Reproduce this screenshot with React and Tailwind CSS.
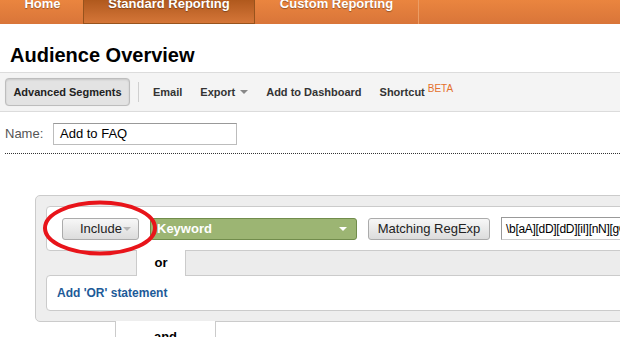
import React from 'react'

const font = "font-['Liberation_Sans',Arial,Helvetica,sans-serif]"

function Caret({ className }) {
  return (
    <svg width="8" height="4" viewBox="0 0 8 4" className={className}>
      <path d="M0 0h8L4 4z" fill="currentColor" />
    </svg>
  )
}

function TopNav() {
  const shadow = '[text-shadow:0_1px_1px_rgba(0,0,0,0.35)]'
  return (
    <div className="flex h-6 bg-gradient-to-b from-[#ea853f] to-[#d97539] text-white text-[13px] font-bold">
      <div className="w-[83px] flex justify-center">
        <span className={`-mt-[3px] leading-[13px] pl-[2px] ${shadow}`}>Home</span>
      </div>
      <div className="w-[172px] flex justify-center bg-gradient-to-b from-[#b0591d] to-[#d57638] border border-t-0 border-[#97531d]">
        <span className={`-mt-[3px] leading-[13px] ${shadow}`}>Standard Reporting</span>
      </div>
      <div className="w-[164px] flex justify-center border-r border-[#ec9d64]">
        <span className={`-mt-[3px] leading-[13px] ${shadow}`}>Custom Reporting</span>
      </div>
      <div className="flex-1" />
    </div>
  )
}

function Toolbar() {
  return (
    <div className="mt-[5px] h-10 border-y border-[#dcdcdc] bg-[#f4f4f4] flex items-center pl-[5px] text-[11px] font-bold text-[#333]">
      <button className="h-[28px] w-[125px] rounded-[4px] border border-[#bdbdbd] bg-[#e3e3e3] shadow-[inset_0_1px_2px_rgba(0,0,0,0.12),0_0_1px_rgba(0,0,0,0.1)] text-[#222] font-bold">
        Advanced Segments
      </button>
      <div className="ml-2 w-px h-5 bg-[#cfcfcf]" />
      <span className="ml-[14px]">Email</span>
      <span className="ml-[18px] flex items-center">
        Export
        <Caret className="ml-[5px] text-[#888]" />
      </span>
      <span className="ml-[18px]">Add to Dashboard</span>
      <span className="ml-[18px]">Shortcut</span>
      <span className="ml-[3px] -mt-[7px] text-[10px] font-normal text-[#e4702c]">BETA</span>
    </div>
  )
}

function NameRow() {
  return (
    <div>
      <div className="mt-[11px] flex items-center pl-[5px]">
        <span className="text-[13px] text-[#555] w-12">Name:</span>
        <div className="h-[22px] w-[184px] border border-[#bcbcbc] border-t-[#999] bg-white flex items-center pl-[6px] text-[13px] text-black">
          Add to FAQ
        </div>
      </div>
      <div className="mt-2 ml-[5px] border-t border-dotted border-[#333]" />
    </div>
  )
}

function SegmentPanel() {
  return (
    <div className="mt-[41px] ml-[35px] w-[640px]">
      <div className="rounded-[5px] border border-[#cbcbcb] bg-[#eeeeee] pt-[10px] pl-[10px] pb-[10px]">
        <div className="h-[45px] rounded-[4px] border border-[#cbcbcb] bg-white flex items-center pl-[15px]">
          <div className="h-[22px] w-[77px] rounded-[3px] border border-[#ababab] bg-gradient-to-b from-[#f7f7f7] to-[#dcdcdc] flex items-center pl-[17px] text-[13px] text-[#222]">
            Include
            <Caret className="ml-[1px] text-[#b5b5b5]" />
          </div>
          <div className="ml-[11px] h-[22px] w-[207px] rounded-[3px] border border-[#718c4c] bg-[#9cb573] flex items-center justify-between pl-[6px] pr-[9px] text-[13px] font-bold text-white">
            Keyword
            <Caret className="text-white" />
          </div>
          <div className="ml-[11px] h-[22px] w-[122px] rounded-[3px] border border-[#ababab] bg-gradient-to-b from-[#f7f7f7] to-[#dcdcdc] flex items-center justify-center text-[13px] text-[#222]">
            Matching RegExp
          </div>
          <div className="ml-[11px] h-[23px] w-[150px] border border-[#999] border-b-[#ccc] bg-white flex items-center pl-[4px] text-[12px] tracking-[-0.3px] text-black whitespace-nowrap overflow-hidden">
            {'\\b[aA][dD][dD][iI][nN][gG]'}
          </div>
        </div>
        <div className="h-6 flex">
          <div className="w-[90px]" />
          <div className="relative z-10 -my-px h-[26px] w-[50px] bg-white border-x border-[#cbcbcb] flex items-center justify-center text-[13px] font-bold text-black">
            or
          </div>
          <div className="flex-1 bg-[#ececec]" />
        </div>
        <div className="h-[36px] rounded-[4px] border border-[#cbcbcb] bg-white flex items-center pl-[10px] text-[12px] font-bold text-[#1d5a98]">
          Add 'OR' statement
        </div>
      </div>
      <div className="relative -mt-px ml-[80px] w-[101px] h-10 bg-white border-x border-[#cbcbcb] flex justify-center pt-[6px] text-[13px] font-bold text-black">
        and
      </div>
    </div>
  )
}

export default function App() {
  return (
    <div className={`relative w-[620px] h-[337px] overflow-hidden bg-white ${font}`}>
      <TopNav />
      <h1 className="mt-[19px] pl-[10px] h-6 leading-6 text-[20px] font-bold text-black">Audience Overview</h1>
      <Toolbar />
      <NameRow />
      <SegmentPanel />
      {/* red annotation circle */}
      <svg className="absolute left-[42px] top-[199px]" width="118" height="58" viewBox="0 0 118 58">
        <ellipse cx="58" cy="29" rx="55" ry="25.5" fill="none" stroke="#e8141a" strokeWidth="4" />
      </svg>
    </div>
  )
}
